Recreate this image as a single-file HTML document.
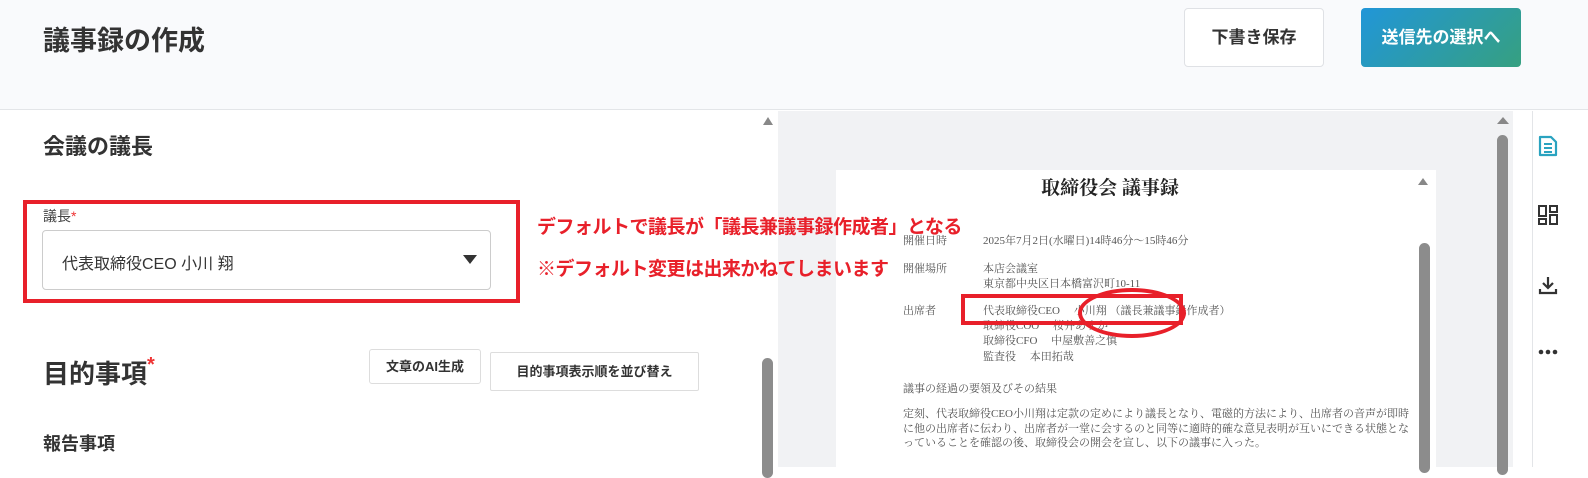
<!DOCTYPE html><html><head><meta charset="utf-8"><style>
*{margin:0;padding:0;box-sizing:border-box}
body{width:1588px;height:467px;overflow:hidden;font-family:"Liberation Sans","Noto Sans CJK JP",sans-serif;background:#fff;position:relative;color:#333}
.a{position:absolute;white-space:nowrap}
.serif{font-family:"Liberation Serif","Noto Serif CJK SC",serif;color:#555;font-size:11px}
.red{z-index:5;font-size:19px;font-weight:bold;color:#e8202a;letter-spacing:-0.5px}
</style></head><body>
<div class="a" style="left:0;top:0;width:1588px;height:110px;background:#f9fafc;border-bottom:1px solid #e3e5e8"></div>
<div class="a" style="left:43px;top:19px;font-size:27px;font-weight:bold;color:#333">議事録の作成</div>
<div class="a" style="left:1184px;top:8px;width:140px;height:59px;border:1px solid #dfe1e5;border-radius:4px;background:#fff;font-size:17px;font-weight:bold;text-align:center;line-height:57px">下書き保存</div>
<div class="a" style="left:1361px;top:8px;width:160px;height:59px;border-radius:4px;background:linear-gradient(135deg,#2196d8,#36a080);color:#fff;font-size:17px;font-weight:bold;text-align:center;line-height:59px">送信先の選択へ</div>

<div class="a" style="left:43px;top:129px;font-size:22px;font-weight:bold">会議の議長</div>
<div class="a" style="left:43px;top:206px;font-size:14px;color:#444">議長<span style="color:#e33">*</span></div>
<div class="a" style="left:42px;top:230px;width:449px;height:60px;border:1px solid #ccc;border-radius:4px;background:#fff"></div>
<div class="a" style="left:62px;top:250px;font-size:16px;color:#333">代表取締役CEO 小川 翔</div>
<div class="a" style="left:463px;top:255px;width:0;height:0;border-left:7px solid transparent;border-right:7px solid transparent;border-top:9px solid #333"></div>
<div class="a" style="left:23px;top:200px;width:497px;height:103px;border:4px solid #e8202a"></div>

<div class="a" style="left:43px;top:354px;font-size:26px;font-weight:bold">目的事項<span style="color:#e33;font-size:20px;vertical-align:top">*</span></div>
<div class="a" style="left:369px;top:349px;width:112px;height:35px;border:1px solid #ddd;border-radius:3px;font-size:13px;font-weight:bold;text-align:center;line-height:33px">文章のAI生成</div>
<div class="a" style="left:490px;top:352px;width:209px;height:39px;border:1px solid #ddd;border-radius:2px;font-size:13px;font-weight:bold;text-align:center;line-height:37px">目的事項表示順を並び替え</div>
<div class="a" style="left:43px;top:430px;font-size:18px;font-weight:bold">報告事項</div>

<div class="a" style="left:763px;top:117px;width:0;height:0;border-left:5px solid transparent;border-right:5px solid transparent;border-bottom:8px solid #888"></div>
<div class="a" style="left:762px;top:358px;width:11px;height:120px;border-radius:6px;background:#8c8c8c"></div>

<div class="a" style="left:778px;top:111px;width:735px;height:356px;background:#f1f2f4"></div>
<div class="a" style="left:836px;top:170px;width:600px;height:300px;background:#fff"></div>
<div class="a" style="left:1418px;top:178px;width:0;height:0;border-left:5px solid transparent;border-right:5px solid transparent;border-bottom:7px solid #888"></div>
<div class="a" style="left:1419px;top:243px;width:11px;height:230px;border-radius:6px;background:#8c8c8c"></div>
<div class="a" style="left:836px;top:173px;width:548px;text-align:center;font-family:'Liberation Serif','Noto Serif CJK SC',serif;font-size:19px;font-weight:bold;color:#222">取締役会 議事録</div>
<div class="a serif" style="left:903px;top:232px">開催日時</div><div class="a serif" style="left:983px;top:232px">2025年7月2日(水曜日)14時46分～15時46分</div>
<div class="a serif" style="left:903px;top:260px">開催場所</div><div class="a serif" style="left:983px;top:260px">本店会議室</div>
<div class="a serif" style="left:983px;top:275px">東京都中央区日本橋富沢町10-11</div>
<div class="a serif" style="left:903px;top:302px">出席者</div><div class="a serif" style="left:983px;top:302px">代表取締役CEO　 小川翔 （議長兼議事録作成者）</div>
<div class="a serif" style="left:983px;top:317px">取締役COO　 桜井あすか</div>
<div class="a serif" style="left:983px;top:332px">取締役CFO　 中屋敷善之慎</div>
<div class="a serif" style="left:983px;top:348px">監査役　 本田拓哉</div>
<div class="a serif" style="left:903px;top:380px">議事の経過の要領及びその結果</div>
<div class="a serif" style="left:903px;top:407px;line-height:14.5px">定刻、代表取締役CEO小川翔は定款の定めにより議長となり、電磁的方法により、出席者の音声が即時<br>に他の出席者に伝わり、出席者が一堂に会するのと同等に適時的確な意見表明が互いにできる状態とな<br>っていることを確認の後、取締役会の開会を宣し、以下の議事に入った。</div>
<div class="a" style="left:961px;top:294px;width:222px;height:31px;border:4px solid #e8202a"></div>
<div class="a" style="left:1078px;top:288px;width:108px;height:50px;border:4px solid #e8202a;border-radius:50%"></div>

<div class="a red" style="left:537px;top:212px">デフォルトで議長が「議長兼議事録作成者」となる</div>
<div class="a red" style="left:537px;top:254px">※デフォルト変更は出来かねてしまいます</div>

<div class="a" style="left:1497px;top:117px;width:0;height:0;border-left:6px solid transparent;border-right:6px solid transparent;border-bottom:7px solid #888"></div>
<div class="a" style="left:1497px;top:135px;width:11px;height:340px;border-radius:6px;background:#8c8c8c"></div>
<div class="a" style="left:1532px;top:111px;width:56px;height:356px;background:#fff;border-left:1px solid #e3e5e8"></div>
<svg class="a" style="left:1537px;top:135px" width="22" height="22" viewBox="0 0 22 22"><path d="M3 2h11l5 5v13H3z" fill="none" stroke="#2aa3c0" stroke-width="2.2" stroke-linejoin="round"/><path d="M7 9h8M7 13h8M7 17h8" stroke="#2aa3c0" stroke-width="2"/></svg>
<svg class="a" style="left:1537px;top:204px" width="22" height="22" viewBox="0 0 22 22" fill="none" stroke="#333" stroke-width="2"><rect x="2" y="2" width="7" height="10"/><rect x="13" y="2" width="7" height="6"/><rect x="2" y="15" width="7" height="5"/><rect x="13" y="11" width="7" height="9"/></svg>
<svg class="a" style="left:1537px;top:274px" width="22" height="22" viewBox="0 0 22 22" fill="none" stroke="#333" stroke-width="2.2"><path d="M11 3v11M6 9l5 5 5-5M3 15v4h16v-4"/></svg>
<svg class="a" style="left:1537px;top:347px" width="22" height="10" viewBox="0 0 22 10" fill="#333"><circle cx="4" cy="5" r="2.3"/><circle cx="11" cy="5" r="2.3"/><circle cx="18" cy="5" r="2.3"/></svg>
</body></html>
